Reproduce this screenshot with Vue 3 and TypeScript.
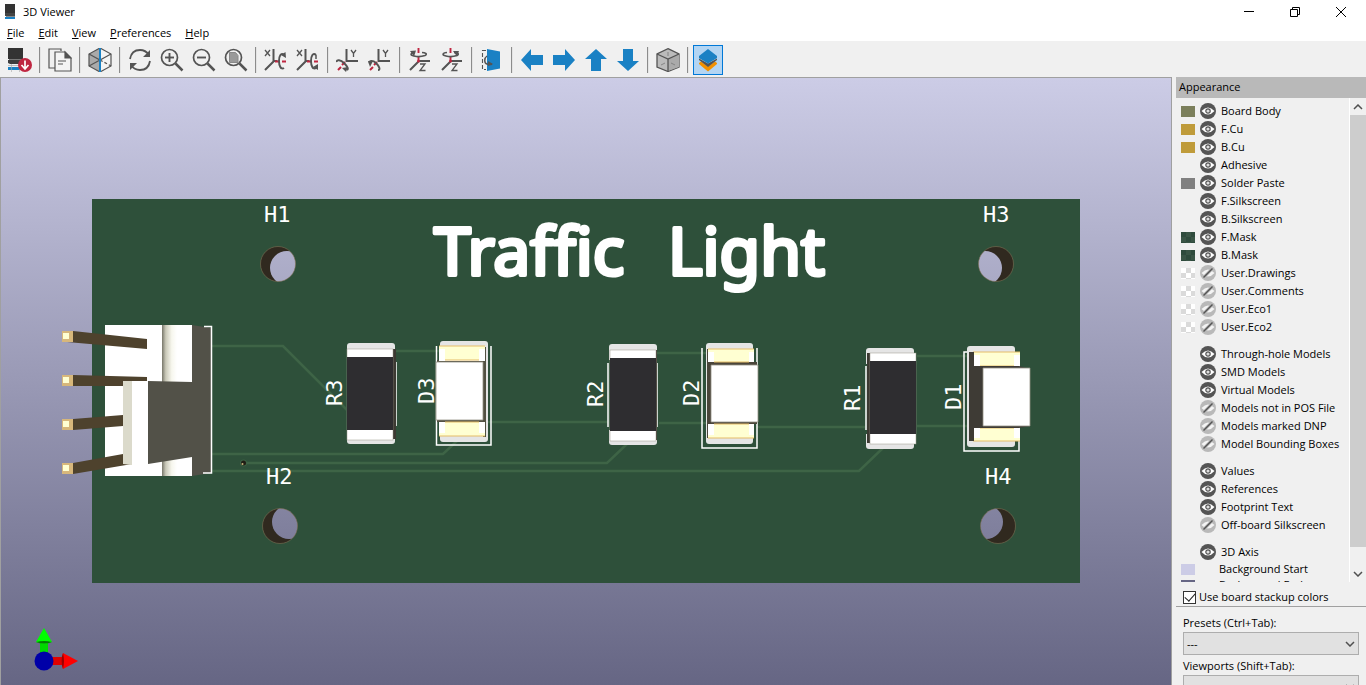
<script setup lang="ts">
import { ref } from 'vue'

interface Row {
  label: string
  swatch?: string
  on?: boolean
  plain?: boolean
}

const menus: [string, string][] = [
  ['F', 'ile'],
  ['E', 'dit'],
  ['V', 'iew'],
  ['P', 'references'],
  ['H', 'elp'],
]

const toolGroups: string[][] = [
  ['Reload board'],
  ['Copy image'],
  ['Raytracing'],
  ['Refresh', 'Zoom in', 'Zoom out', 'Zoom to fit'],
  ['Rotate X clockwise', 'Rotate X counterclockwise'],
  ['Rotate Y clockwise', 'Rotate Y counterclockwise'],
  ['Rotate Z clockwise', 'Rotate Z counterclockwise'],
  ['Flip board'],
  ['Move left', 'Move right', 'Move up', 'Move down'],
  ['Orthographic projection'],
  ['Appearance manager'],
]

const groups = ref<Row[][]>([
  [
    { label: 'Board Body', swatch: 'body', on: true },
    { label: 'F.Cu', swatch: 'copper', on: true },
    { label: 'B.Cu', swatch: 'copper', on: true },
    { label: 'Adhesive', on: true },
    { label: 'Solder Paste', swatch: 'paste', on: true },
    { label: 'F.Silkscreen', on: true },
    { label: 'B.Silkscreen', on: true },
    { label: 'F.Mask', swatch: 'mask', on: true },
    { label: 'B.Mask', swatch: 'mask', on: true },
    { label: 'User.Drawings', swatch: 'clear' },
    { label: 'User.Comments', swatch: 'clear' },
    { label: 'User.Eco1', swatch: 'clear' },
    { label: 'User.Eco2', swatch: 'clear' },
  ],
  [
    { label: 'Through-hole Models', on: true },
    { label: 'SMD Models', on: true },
    { label: 'Virtual Models', on: true },
    { label: 'Models not in POS File' },
    { label: 'Models marked DNP' },
    { label: 'Model Bounding Boxes' },
  ],
  [
    { label: 'Values', on: true },
    { label: 'References', on: true },
    { label: 'Footprint Text', on: true },
    { label: 'Off-board Silkscreen' },
  ],
  [
    { label: '3D Axis', on: true },
    { label: 'Background Start', swatch: 'start', plain: true },
    { label: 'Background End', swatch: 'end', plain: true },
  ],
])

const stackup = ref(true)

const holes = [
  { id: 'h1', x: 278, y: 264, lx: 287, ly: 268, label: 'H1', tx: 264, ty: 222 },
  { id: 'h3', x: 996, y: 264, lx: 985, ly: 268, label: 'H3', tx: 983, ty: 222 },
  { id: 'h2', x: 280, y: 526, lx: 289, ly: 522, label: 'H2', tx: 266, ty: 484 },
  { id: 'h4', x: 998, y: 526, lx: 986, ly: 522, label: 'H4', tx: 985, ty: 484 },
]

const refs = [
  { label: 'R3', x: 342, y: 406 },
  { label: 'D3', x: 434, y: 404 },
  { label: 'R2', x: 603, y: 407 },
  { label: 'D2', x: 699, y: 406 },
  { label: 'R1', x: 860, y: 411 },
  { label: 'D1', x: 961, y: 410 },
]

const resistors = [
  { pad: 347, py: 343, body: 347, y: 349, side: 393, sw: 3, silk: [396] },
  { pad: 609, py: 344, body: 610, y: 350, side: 656, sw: 1, silk: [608, 657] },
  { pad: 866, py: 348, body: 870, y: 353, side: 867, sw: 3, silk: [866] },
]
</script>

<template>
  <div class="window">
    <header class="titlebar">
      <svg class="app-icon" viewBox="0 0 12 16" aria-hidden="true">
        <path d="M0 0h10v9H0z" fill="#333" />
        <path d="M0 9h10v3H0z" fill="#444" />
        <path d="M1 12h9v1H1z" fill="#888" />
        <path d="M0 13h10v2H0z" fill="#1a81c4" />
      </svg>
      <h1>3D Viewer</h1>
      <div class="window-buttons">
        <button type="button" aria-label="Minimize"><svg viewBox="0 0 12 12"><path d="M1 5.500h10" /></svg></button>
        <button type="button" aria-label="Restore"><svg viewBox="0 0 12 12"><path d="M1.500 3.500h7v7h-7zM3.500 3.500v-2h7v7h-2" /></svg></button>
        <button type="button" aria-label="Close"><svg viewBox="0 0 12 12"><path d="M1 1l10 10M11 1L1 11" /></svg></button>
      </div>
    </header>

    <nav class="menubar">
      <button v-for="m in menus" :key="m[1]" type="button"><u>{{ m[0] }}</u>{{ m[1] }}</button>
    </nav>

    <div class="toolbar" role="toolbar">
      <div v-for="(g, gi) in toolGroups" :key="gi" class="tool-group">
        <button
          v-for="t in g"
          :key="t"
          type="button"
          class="tool"
          :class="{ active: t === 'Appearance manager' }"
          :aria-label="t"
        >
          <svg viewBox="0 0 24 24" fill="none" stroke="#545454" stroke-width="1.5">
            <g v-if="t === 'Reload board'" stroke="none">
              <path d="M0 0h15v11H0z" fill="#333" /><path d="M1 11h13v1H1z" fill="#777" /><path d="M0 12h15v3l-2 1H2l-2-1z" fill="#3d3d3d" />
              <path d="M0 17h14v1H0z" fill="#bbb" /><path d="M0 19h12v3H0z" fill="#1a81c4" />
              <path d="M3.500 16v8M11.500 16v8" stroke="#aaa" stroke-width=".6" />
              <circle cx="17" cy="17" r="7" fill="#bf2641" />
              <path d="M17 12.500v8M13.500 17l3.500 4 3.500-4" stroke="#fff" stroke-width="1.700" />
            </g>
            <g v-else-if="t === 'Copy image'" stroke-width="1.200">
              <path d="M7 20H1V1h12v2" /><path d="M7 4h10l6 6v13H7z" fill="#f4f4f4" />
              <path d="M17 4l6 6h-6z" fill="#545454" /><path d="M10 13h8M10 16h5" />
            </g>
            <g v-else-if="t === 'Raytracing'" stroke-width="1.200">
              <path d="M12 0v24L1 18V6z" fill="#aaa" /><path d="M12 0l11 6v12l-11 6z" fill="#f4f4f4" />
              <path d="M1 6l11 6 11-6M1 18l11-6" /><path d="M12 12l11 6" stroke-dasharray="3 2" />
              <path d="M12 0v24" stroke="#1a81c4" stroke-width="2" />
            </g>
            <g v-else-if="t === 'Refresh'" stroke-width="1.800">
              <path d="M2 11C3 5 7 2 12 2c4 0 7 2 9 5M22 13c-1 6-5 9-10 9-4 0-7-2-9-5" />
              <path d="M22 2v7h-7zM2 22v-7h7z" fill="#545454" stroke="none" />
            </g>
            <g v-else-if="t.startsWith('Zoom')">
              <circle cx="9.500" cy="9.500" r="8" stroke-width="1.700" />
              <path d="M15.500 15.500l7 7" stroke-width="2.500" />
              <path v-if="t !== 'Zoom to fit'" d="M5 9.500h9" stroke-width="1.900" />
              <path v-if="t === 'Zoom in'" d="M9.500 5v9" stroke-width="1.900" />
              <path v-if="t === 'Zoom to fit'" d="M5.500 4.500h6l2.500 3v7H5.500z" fill="#999" stroke="#888" stroke-width="1" />
            </g>
            <g v-else-if="t.startsWith('Rotate X')">
              <path d="M9.500 1v12h4M10 13l-9 9" stroke-width="2" />
              <path d="M1 2l5 6M6 2L1 8" stroke-width="1.300" />
              <path d="M11 13.500h4M18 13.500h4" stroke="#bf2641" stroke-width="1.900" />
              <template v-if="t === 'Rotate X clockwise'">
                <path d="M20 7c-3-3-5 1-5 6s2 9 5 7" stroke-width="1.900" /><path d="M17 7l4.500-3 .5 6z" fill="#545454" stroke="none" />
              </template>
              <template v-else>
                <path d="M20 7c-3-3-5 1-5 6s2 9 5 7" stroke-width="1.900" /><path d="M17 19l5-3v6z" fill="#545454" stroke="none" />
                <path d="M20 7v4" stroke-width="1.500" />
              </template>
            </g>
            <g v-else-if="t.startsWith('Rotate Y')">
              <path d="M10.500 1v12H22" stroke-width="2" />
              <path d="M15 2l2.500 3.500L20 2M17.500 5.500V9" stroke-width="1.300" />
              <path d="M9 14l-3 3M5 19l-3 3" stroke="#bf2641" stroke-width="2" />
              <template v-if="t === 'Rotate Y clockwise'">
                <path d="M1 14c-1-3 4-2 7 1s5 6 3 7" stroke-width="1.900" /><path d="M6 20l6-1-2 5z" fill="#545454" stroke="none" />
              </template>
              <template v-else>
                <path d="M2 16c-2-4 3-4 6-1s5 7 2 7" stroke-width="1.900" /><path d="M0 13l5 0-3 6z" fill="#545454" stroke="none" />
              </template>
            </g>
            <g v-else-if="t.startsWith('Rotate Z')">
              <path d="M10.500 13H22M11 13l-9 9" stroke-width="2" />
              <path d="M12 16h5l-5 6.500h5.500" stroke-width="1.300" />
              <path d="M10.500 0v5M10.500 8.500V12" stroke="#bf2641" stroke-width="1.900" />
              <circle cx="10.500" cy="13" r="1.500" fill="#bf2641" stroke="none" />
              <path d="M7 4.500C2 5 2 7 6 8c3 .7 8 .5 11-.5 3-1.500 0-3-3-3" stroke-width="1.700" />
              <path v-if="t === 'Rotate Z clockwise'" d="M2 3l6-.5-2 6z" fill="#545454" stroke="none" />
              <path v-else d="M13 3l6 0-2 5.500z" fill="#545454" stroke="none" />
            </g>
            <g v-else-if="t === 'Flip board'">
              <path d="M6 2.500H2.500v19H6" stroke-dasharray="4 2" stroke-width="1.100" />
              <path d="M7 1l13 2.500v17L7 23z" fill="#1a81c4" stroke="none" />
              <path d="M7 8c-3 2-3 7 0 8 2 .6 4 .5 5 0" stroke-width="1.500" /><path d="M8 13l5 3-5 2z" fill="#545454" stroke="none" />
            </g>
            <path v-else-if="t === 'Move left'" d="M1 12L11 1v6h12v10H11v6z" fill="#1a81c4" stroke="none" />
            <path v-else-if="t === 'Move right'" d="M23 12L13 1v6H1v10h12v6z" fill="#1a81c4" stroke="none" />
            <path v-else-if="t === 'Move up'" d="M12 1l11 10h-6v12H7V11H1z" fill="#1a81c4" stroke="none" />
            <path v-else-if="t === 'Move down'" d="M12 23L1 13h6V1h10v12h6z" fill="#1a81c4" stroke="none" />
            <g v-else-if="t === 'Orthographic projection'" stroke-width="1.300">
              <path d="M12 .7l11 5.300v13l-11 4.500-11-4.500V6z" fill="#bbb" /><path d="M12 11v12l11-4V6z" fill="#aaa" stroke="none" />
              <path d="M1 6l11 5 11-5M12 11v12" /><path d="M12 4v4M5 17l4-2M15 15l4 2" stroke="#777" stroke-width=".8" />
            </g>
            <g v-else stroke="none">
              <path d="M3 15l2-1.500 7 5 7-5 2 1.500v1l-9 7.500L3 16z" fill="#f29100" />
              <path d="M3 10.500l9 5 9-5V12l-9 7-9-7z" fill="#545454" />
              <path d="M12 1l9 7v2l-9 5.500L3 10V8z" fill="#1a81c4" />
            </g>
          </svg>
        </button>
      </div>
    </div>

    <main class="content">
      <section class="viewport" aria-label="Board view">
        <svg class="scene" viewBox="1 78 1170 607" preserveAspectRatio="xMidYMid slice">
          <defs>
            <linearGradient id="sky" gradientUnits="userSpaceOnUse" x1="0" y1="78" x2="0" y2="685">
              <stop offset="0" stop-color="#ccccE6" /><stop offset="1" stop-color="#666684" />
            </linearGradient>
            <linearGradient id="groove">
              <stop offset="0" stop-color="#77766a" /><stop offset=".25" stop-color="#c9c8b8" />
              <stop offset=".65" stop-color="#f7f7ee" /><stop offset="1" stop-color="#fff" />
            </linearGradient>
            <clipPath v-for="h in holes" :id="h.id" :key="h.id"><circle :cx="h.x" :cy="h.y" r="17.500" /></clipPath>
          </defs>
          <rect x="1" y="78" width="1170" height="607" fill="url(#sky)" />
          <rect x="92" y="199" width="988" height="384" fill="#2e503a" />

          <g fill="none" stroke="#3e6446" stroke-width="2.500">
            <path d="M211 346h72l66 66M396 351h44M487 422h124M657 423h50M657 353h50M757 427h112M917 426h50M917 356h50" />
            <path d="M211 454h232l14-13M243 463h364l20-19M211 471h648l24-23" />
          </g>
          <circle cx="243.500" cy="463" r="3.500" fill="#3c6244" />
          <circle cx="243.500" cy="463" r="2.500" fill="#211e16" /><circle cx="242.500" cy="464" r="1" fill="#c9b67c" />

          <g v-for="h in holes" :key="h.label">
            <g :clip-path="`url(#${h.id})`">
              <circle :cx="h.x" :cy="h.y" r="18" fill="#30291f" />
              <circle :cx="h.lx" :cy="h.ly" r="17" fill="url(#sky)" />
            </g>
            <circle :cx="h.x" :cy="h.y" r="17.500" fill="none" stroke="#8b7a5c" stroke-width=".5" />
            <text class="silk-text" :x="h.tx" :y="h.ty">{{ h.label }}</text>
          </g>

          <text class="silk-title" y="275"><tspan x="434">Traffic</tspan><tspan x="668">Light</tspan></text>
          <text
            v-for="r in refs"
            :key="r.label"
            class="silk-text"
            :transform="`translate(${r.x} ${r.y}) rotate(-90)`"
          >{{ r.label }}</text>

          <!-- Pin header -->
          <path d="M105 325h87v151h-87z" fill="#fff" />
          <path d="M162 325h15v151h-15z" fill="url(#groove)" />
          <path d="M192 325l19 3v145l-19 3v-19l-44 7v-83l44 1z" fill="#525148" />
          <path d="M204 326.500h7.500v146.500H203" fill="none" stroke="#fff" stroke-width="1.500" />
          <g fill="#4e422d">
            <path d="M73 331l74 8v10l-80-7z" /><path d="M73 375l74 2v4h-24v5H73z" />
            <path d="M73 419l50-4v11l-50 4z" /><path d="M73 463l50-9 9 10-59 10z" />
          </g>
          <path d="M132 381h16v83l-16 1z" fill="#fff" />
          <path d="M123 381h9v84l-9-1z" fill="#dbdacb" />
          <g v-for="y in [331, 375, 419, 463]" :key="y">
            <rect x="62" :y="y" width="11" height="11" fill="#d7b77b" /><rect x="63" :y="y + 2" width="6" height="6" fill="#ffffd2" />
          </g>

          <!-- Resistors -->
          <g v-for="r in resistors" :key="r.pad">
            <rect :x="r.pad" :y="r.py" width="48" height="101" rx="3" fill="#e5e5e5" />
            <rect :x="r.pad - 1" :y="r.py + 16" width="51" height="70" fill="#2e503a" />
            <path v-for="s in r.silk" :key="s" :d="`M${s} ${r.y + 13}v64`" stroke="#fff" stroke-width="1.500" />
            <rect :x="r.side" :y="r.y" :width="r.sw" height="90" fill="#3c3932" />
            <rect :x="r.body" :y="r.y" width="46" height="91" fill="#fff" stroke="#9b988b" stroke-width=".5" />
            <rect :x="r.body" :y="r.y + 8" width="46" height="73" fill="#2e2d30" />
          </g>

          <!-- D3 -->
          <path d="M436.500 346v99H491v-99" class="outline" />
          <rect x="440" y="341" width="48" height="101" rx="3" fill="#e5e5e5" />
          <path d="M483 347h3v90h-3zM437 360h49v62h-49z" fill="#525042" />
          <path d="M439 346h46v15h-46zM439 422h46v14h-46z" fill="#fff" />
          <path d="M445 346h34v14h-34zM445 422h34v14h-34zM439 346h46v3h-46zM439 433h46v3h-46z" fill="#ffffd2" />
          <path d="M439 346h46M445 360h34M445 422h34M439 436h46" stroke="#e5bd68" />
          <path d="M436 362h47v58h-47z" fill="#fff" stroke="#929083" stroke-width=".8" />

          <!-- D2 -->
          <path d="M702 348v100h55V348" class="outline" />
          <rect x="706" y="343" width="47" height="101" rx="3" fill="#e5e5e5" />
          <path d="M707 349h5v89h-5zM707 362h50v62h-50z" fill="#4a453a" />
          <path d="M708 349h46v13h-46zM708 424h46v14h-46z" fill="#fff" />
          <path d="M714 349h35v13h-35zM714 424h35v14h-35zM708 349h46v3h-46zM708 435h46v3h-46z" fill="#ffffd2" />
          <path d="M708 349h46M714 362h35M714 424h35M708 438h46" stroke="#e5bd68" />
          <path d="M711 365h47v57h-47z" fill="#fff" stroke="#929083" stroke-width=".8" />

          <!-- D1 -->
          <path d="M971 352h-7v99h55v-99" class="outline" />
          <rect x="967" y="346" width="48" height="101" rx="3" fill="#e5e5e5" />
          <path d="M974 352h46v14h-46zM974 428h46v13h-46z" fill="#fff" />
          <path d="M980 352h34v14h-34zM980 428h34v13h-34zM972 352h48v3h-48zM972 438h48v3h-48z" fill="#ffffd2" />
          <path d="M973 352h47M980 366h34M980 428h34M973 441h47" stroke="#e5bd68" />
          <path d="M969 352h5v14h45l11 3v57l-11 2h-45v13h-5z" fill="#3e3b35" />
          <path d="M983 368h47v58h-47z" fill="#fff" stroke="#929083" stroke-width=".8" />

          <!-- Orientation axes -->
          <path d="M40 641h8v14h-8z" fill="#00d800" /><path d="M44 628l8 14q-8 3-16 0z" fill="#0f0" />
          <path d="M36 642q8 3 16 0-8-2-16 0z" fill="#057a05" />
          <path d="M50 657h14v8H50z" fill="#e00000" /><path d="M78 661l-15 8q-3-8 0-16z" fill="#f00" />
          <path d="M63 653q-3 8 0 16 2-8 0-16z" fill="#900" />
          <circle cx="44" cy="661" r="9.500" fill="#0000a8" />
        </svg>
      </section>

      <aside class="panel">
        <h2>Appearance</h2>
        <div class="list-wrap">
          <div class="list">
            <ul v-for="(g, gi) in groups" :key="gi">
              <li v-for="row in g" :key="row.label" :class="{ plain: row.plain }">
                <span class="swatch" :class="row.swatch"></span>
                <button v-if="!row.plain" type="button" class="eye" :aria-label="`Toggle ${row.label}`" @click="row.on = !row.on">
                  <svg v-if="row.on" viewBox="0 0 16 16">
                    <circle cx="8" cy="8" r="8" fill="#545454" /><path d="M1.500 8Q8 .8 14.500 8 8 15.200 1.500 8z" fill="#fff" />
                    <circle cx="8" cy="8" r="2.200" fill="#ddd" stroke="#545454" stroke-width="1.200" />
                  </svg>
                  <svg v-else viewBox="0 0 16 16">
                    <circle cx="8" cy="8" r="8" fill="#b9b9b9" /><path d="M1.500 8Q8 .8 14.500 8 8 15.200 1.500 8z" fill="#f4f4f4" />
                    <path d="M3.500 12.500l9-9" stroke="#b9b9b9" stroke-width="3" /><path d="M3.500 12.500l9-9" stroke="#545454" stroke-width="1.500" />
                  </svg>
                </button>
                <span class="name">{{ row.label }}</span>
              </li>
            </ul>
          </div>
          <div class="scrollbar">
            <button type="button" aria-label="Scroll up"><svg viewBox="0 0 10 6"><path d="M1 5l4-4 4 4" /></svg></button>
            <div class="track"><div class="thumb"></div></div>
            <button type="button" aria-label="Scroll down"><svg viewBox="0 0 10 6"><path d="M1 1l4 4 4-4" /></svg></button>
          </div>
        </div>
        <div class="stackup">
          <label><input v-model="stackup" type="checkbox" />Use board stackup colors</label>
        </div>
        <div class="presets">
          <label for="presets">Presets (Ctrl+Tab):</label>
          <div class="combo">
            <select id="presets"><option>---</option></select>
            <svg viewBox="0 0 10 6"><path d="M1 1l4 4 4-4" /></svg>
          </div>
          <label for="viewports">Viewports (Shift+Tab):</label>
          <div class="combo">
            <select id="viewports"><option>---</option></select>
            <svg viewBox="0 0 10 6"><path d="M1 1l4 4 4-4" /></svg>
          </div>
        </div>
      </aside>
    </main>
  </div>
</template>

<style>
body {
  overflow: hidden;
}
</style>

<style scoped>
* {
  box-sizing: border-box;
}
.window {
  display: flex;
  flex-direction: column;
  height: 100vh;
  overflow: hidden;
  background: #f0f0f0;
  color: #000;
  font: 11px/16px "Open Sans", "Noto Sans", sans-serif;
}
button {
  margin: 0;
  padding: 0;
  border: 0;
  background: none;
  color: inherit;
  font: inherit;
}
h1,
h2 {
  margin: 0;
  font: inherit;
}
.titlebar {
  display: flex;
  align-items: center;
  height: 24px;
  padding-left: 5px;
  background: #fff;
}
.app-icon {
  width: 12px;
  height: 16px;
  margin-right: 6px;
}
.window-buttons {
  display: flex;
  margin-left: auto;
  padding-right: 2px;
}
.window-buttons button {
  display: grid;
  place-items: center;
  width: 46px;
  height: 22px;
}
.window-buttons svg {
  width: 12px;
  height: 12px;
  fill: none;
  stroke: #000;
  stroke-width: 1;
}
.menubar {
  display: flex;
  height: 17px;
  background: #fff;
}
.menubar button {
  padding: 0 7px;
}
.toolbar {
  display: flex;
  align-items: center;
  height: 36px;
  padding: 2px 0 0 4px;
}
.tool-group {
  display: flex;
}
.tool-group + .tool-group::before {
  content: "";
  width: 1px;
  height: 26px;
  margin: 2px 3px;
  background: #8c8c8c;
  border-right: 1px solid #e4e4e4;
}
.tool {
  display: grid;
  place-items: center;
  width: 30px;
  height: 30px;
  margin: 0 1px;
}
.tool svg {
  width: 24px;
  height: 24px;
}
.tool.active {
  background: #b3d5f3;
  border: 1px solid #0078d7;
}
.content {
  display: flex;
  flex: 1;
  min-height: 0;
}
.viewport {
  flex: 1;
  min-width: 0;
  border: 1px solid #a0a0a0;
  border-width: 1px 0 0 1px;
}
.scene {
  display: block;
  width: 100%;
  height: 100%;
}
.silk-text {
  fill: #fff;
  font: 22px "DejaVu Sans Mono", monospace;
}
.silk-title {
  fill: #fff;
  stroke: #fff;
  stroke-width: 4;
  stroke-linejoin: round;
  font: 66px "Noto Sans", sans-serif;
  font-variant-ligatures: none;
}
.outline {
  fill: none;
  stroke: #fff;
  stroke-width: 1.5;
}
.panel {
  display: flex;
  flex-direction: column;
  width: 195px;
  padding-left: 4px;
  border-left: 1px solid #a0a0a0;
  background: #f0f0f0;
}
.panel h2 {
  height: 21px;
  padding-left: 3px;
  background: #b9b9b9;
  line-height: 20px;
}
.list-wrap {
  display: flex;
  flex: 1;
  min-height: 0;
}
.list {
  flex: 1;
  padding-top: 4px;
  overflow: hidden;
}
ul {
  margin: 0 0 9px;
  padding: 0;
  list-style: none;
}
li {
  display: flex;
  align-items: center;
  height: 18px;
  padding-left: 5px;
  white-space: nowrap;
}
li.plain {
  height: 16px;
}
li.plain .name {
  margin-left: 24px;
}
.swatch {
  width: 14px;
  height: 11px;
}
.eye {
  width: 16px;
  height: 16px;
  margin: 0 5px;
}
.eye svg {
  display: block;
}
.body {
  background: #7b7f5b;
}
.copper {
  background: #bf9b3a;
}
.paste {
  background: #808080;
}
.mask {
  background: repeating-conic-gradient(#3a5546 0 25%, #2f4b3d 0 50%) 0 0 / 10px 10px;
}
.clear {
  background: repeating-conic-gradient(#dadada 0 25%, #fff 0 50%) 0 0 / 10px 10px;
}
.start {
  background: #cccce6;
}
.end {
  background: #666684;
}
.scrollbar {
  display: flex;
  flex-direction: column;
  width: 17px;
  border-left: 1px solid #fff;
}
.scrollbar button {
  display: grid;
  place-items: center;
  height: 17px;
}
.scrollbar svg,
.combo svg {
  width: 10px;
  height: 6px;
  fill: none;
  stroke: #505050;
  stroke-width: 1.5;
}
.track {
  flex: 1;
}
.thumb {
  height: 96%;
  background: #cdcdcd;
}
.stackup {
  height: 25px;
  padding: 7px 0 0 7px;
  border-bottom: 1px solid #a0a0a0;
}
.stackup label {
  display: flex;
  align-items: center;
}
.stackup input {
  display: grid;
  place-items: center;
  appearance: none;
  width: 13px;
  height: 13px;
  margin: 0 3px 0 0;
  border: 1px solid #333;
  background: #fff;
}
.stackup input:checked::after {
  content: "";
  width: 9px;
  height: 5px;
  margin-bottom: 3px;
  border: solid #222;
  border-width: 0 0 1px 1px;
  transform: rotate(-48deg);
}
.presets {
  height: 78px;
  padding: 8px 7px 0;
  overflow: hidden;
}
.presets label {
  display: block;
}
.combo {
  display: grid;
  align-items: center;
  margin: 1px 0 3px;
}
.combo > * {
  grid-area: 1 / 1;
}
.combo svg {
  justify-self: end;
  margin-right: 4px;
  pointer-events: none;
}
select {
  appearance: none;
  width: 100%;
  height: 23px;
  padding: 0 3px;
  border: 1px solid #adadad;
  border-radius: 0;
  background: #e1e1e1;
  color: #000;
  font: inherit;
}
</style>
